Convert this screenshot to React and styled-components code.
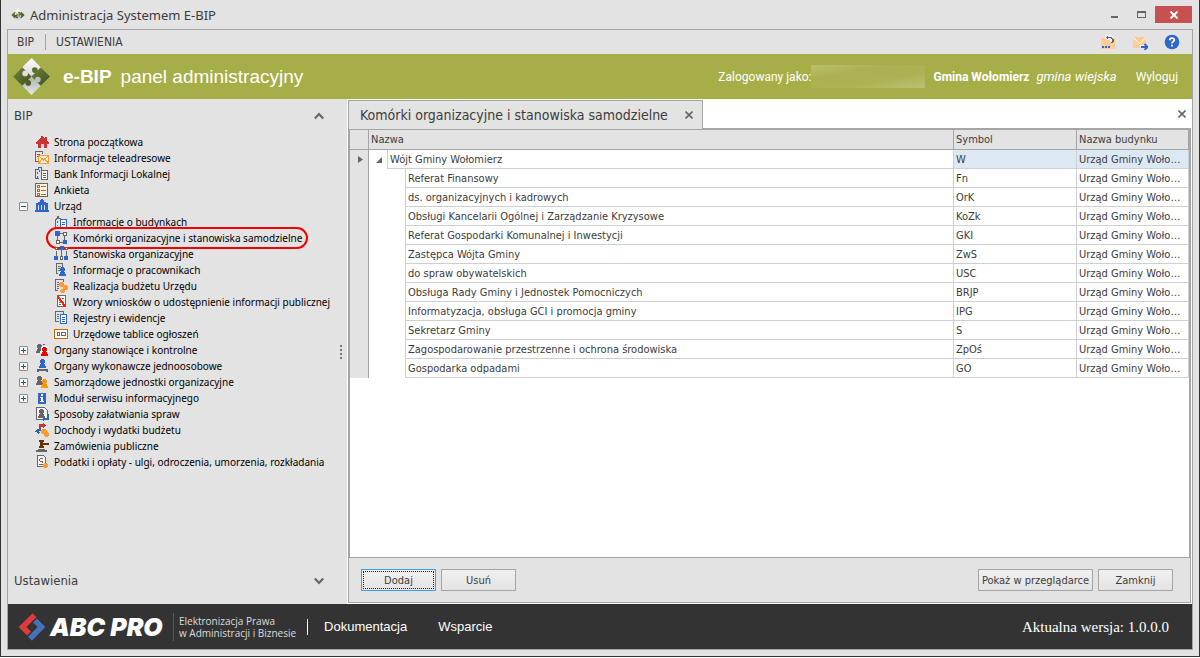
import React, { useState } from 'react';
import styled, { createGlobalStyle, css } from 'styled-components';

const c = {
  panel: '#e3e3e3',
  line: '#a5a5a5',
  rowLine: '#d0d0d0',
  text: '#3c3c3c',
  green: '#a6ae48',
  dark: '#333333',
  blue: '#2f66cc',
  grey: '#666666',
  orange: '#ff9a33',
  red: '#cc3333',
};

const Global = createGlobalStyle`
  * { box-sizing: border-box; }
  body {
    margin: 0;
    background: #ffffff;
    color: ${c.text};
    font-family: Tahoma, 'DejaVu Sans Condensed', 'Liberation Sans', sans-serif;
    font-size: 11px;
    line-height: 16px;
  }
  button, input { font: inherit; color: inherit; }
  a { color: inherit; text-decoration: none; }
  ul { list-style: none; margin: 0; padding: 0; }
`;

/* ---------- window ---------- */

const Page = styled.div`
  display: flex;
  flex-direction: column;
  min-height: 100vh;
  padding-bottom: 1px;
`;

const Window = styled.div`
  flex: 1;
  display: flex;
  flex-direction: column;
  background: ${c.panel};
  border: 1px solid ${c.dark};
  border-top: 0;
  padding: 0 6px 6px;
`;

const TitleBar = styled.header`
  display: flex;
  align-items: center;
  height: 29px;
  padding: 0 1px 0 4px;
  gap: 5px;
`;

const WindowTitle = styled.h1`
  flex: 1;
  margin: 0;
  font-family: Tahoma, 'Noto Sans', sans-serif;
  font-size: 13px;
  line-height: 20px;
  font-weight: 400;
`;

const WindowButtons = styled.div`
  display: flex;
  align-items: center;
`;

const WindowButton = styled.button`
  display: grid;
  place-items: center;
  width: ${(p) => (p.$close ? 37 : 27)}px;
  height: 17px;
  padding: 0;
  border: 0;
  background: ${(p) => (p.$close ? '#c75050' : 'transparent')};
`;

const Frame = styled.div`
  flex: 1;
  display: flex;
  flex-direction: column;
  border: 1px solid ${c.line};
`;

const MenuBar = styled.nav`
  display: flex;
  align-items: center;
  height: 24px;
  padding: 0 12px 0 9px;
`;

const MenuLink = styled.a`
  font-size: 12px;
  line-height: 16px;
  & + & {
    margin-left: 11px;
    padding-left: 10px;
    border-left: 1px solid ${c.line};
  }
`;

const Tools = styled.div`
  display: flex;
  gap: 16px;
  margin-left: auto;
`;

const IconButton = styled.button`
  display: grid;
  place-items: center;
  padding: 0;
  border: 0;
  background: transparent;
  color: ${c.grey};
`;

/* ---------- banner ---------- */

const Banner = styled.div`
  display: flex;
  align-items: center;
  height: 45px;
  padding: 0 14px 0 4px;
  background: ${c.green};
  color: #ffffff;
  font-family: 'Liberation Sans', Arial, sans-serif;
`;

const Brand = styled.div`
  flex: 1;
  display: flex;
  align-items: center;
  gap: 12px;
  font-size: 19px;
  line-height: 24px;
`;

const BrandText = styled.span`
  display: flex;
  gap: 9px;
`;

const Session = styled.div`
  display: flex;
  align-items: center;
  font-family: Roboto, sans-serif;
  font-size: 12px;
`;

const Redacted = styled.span`
  width: 114px;
  height: 23px;
  margin-right: 8px;
  background: linear-gradient(170deg, #b9bf70, #aab150 35%, #acb355 65%, #bbc175);
`;

const Account = styled.span`
  display: flex;
  gap: 7px;
`;

const Kind = styled.i`
  font-size: 13px;
`;

const Logout = styled.a`
  margin-left: 19px;
`;

/* ---------- body ---------- */

const Body = styled.div`
  flex: 1;
  display: flex;
`;

const Sidebar = styled.aside`
  flex: none;
  display: grid;
  grid-template-columns: 1fr 12px;
  width: 340px;
  border-right: 1px solid #ffffff;
`;

const Sections = styled.div`
  display: flex;
  flex-direction: column;
`;

const SectionBody = styled.ul`
  flex: 1;
`;

const Section = styled.button`
  display: flex;
  align-items: center;
  justify-content: space-between;
  width: 100%;
  height: ${(p) => (p.$last ? 46 : 35)}px;
  padding: 0 11px ${(p) => (p.$last ? 0 : 2)}px 6px;
  border: 0;
  background: transparent;
  font-size: 13px;
  line-height: 18px;
`;

const Splitter = styled.div`
  display: grid;
  align-content: center;
  justify-items: center;
  gap: 2px;
`;

const SplitterDot = styled.i`
  width: 2px;
  height: 2px;
  background: #777777;
`;

const TreeRow = styled.div`
  display: flex;
  align-items: center;
  height: 16px;
  padding-left: ${(p) => (p.$deep ? 45 : 11)}px;
  color: #000000;
  font-family: Tahoma, 'Noto Sans', sans-serif;
  font-size: 10px;
`;

const TreeSlot = styled.span`
  display: grid;
  width: 15px;
`;

const TreeToggle = styled.button`
  display: grid;
  place-items: center;
  width: 9px;
  height: 9px;
  padding: 0;
  border: 1px solid #8c8c8c;
  border-radius: 1px;
  background: #f8f8f8;
`;

const TreeLink = styled.a`
  position: relative;
  display: flex;
  align-items: center;
  gap: 4px;
  white-space: nowrap;
  ${(p) =>
    p.$marked &&
    css`
      &::after {
        content: '';
        position: absolute;
        inset: -3px -6px -3px -7px;
        border: 2px solid #f40000;
        border-radius: 11px;
      }
    `}
`;

/* ---------- document area ---------- */

const Workspace = styled.main`
  flex: 1;
  min-width: 0;
  display: flex;
  flex-direction: column;
  padding: 1px 1px 1px 0;
  background: #ffffff;
`;

const TabStrip = styled.div`
  display: flex;
  align-items: center;
  justify-content: space-between;
  height: 28px;
  padding-right: 5px;
`;

const Tab = styled.div`
  position: relative;
  display: flex;
  align-items: center;
  align-self: flex-start;
  gap: 17px;
  height: 29px;
  padding: 0 9px 0 11px;
  border: 1px solid ${c.line};
  border-bottom: 0;
  background: ${c.panel};
  font-size: 14px;
  line-height: 18px;
`;

const Panel = styled.section`
  flex: 1;
  display: flex;
  flex-direction: column;
  border: 1px solid ${c.line};
  background: ${c.panel};
`;

const Grid = styled.div`
  flex: 1;
  border: 1px solid ${c.line};
  background: #ffffff;
`;

const Table = styled.table`
  width: 100%;
  table-layout: fixed;
  border-collapse: separate;
  border-spacing: 0;
`;

const Col = styled.col`
  width: ${(p) => (p.$w ? `${p.$w}px` : 'auto')};
`;

const Th = styled.th`
  height: 20px;
  padding: 0 2px;
  border: solid ${c.line};
  border-width: 0 1px 1px 0;
  background: ${c.panel};
  font-weight: 400;
  text-align: left;
`;

const Td = styled.td`
  height: 19px;
  padding: 2px 2px 0;
  border: solid ${c.rowLine};
  border-width: 0 1px 1px 0;
  background: ${(p) => (p.$active ? '#dce9f4' : '#ffffff')};
  overflow: hidden;
  text-overflow: ellipsis;
  white-space: nowrap;
`;

const Indicator = styled.td`
  padding: 0 0 0 8px;
  border-right: 1px solid ${c.line};
  background: ${c.panel};
  line-height: 0;
`;

const NameTd = styled.td`
  padding: 0;
  border-right: 1px solid ${c.rowLine};
`;

const NameCell = styled.div`
  display: flex;
  align-items: center;
  padding-left: ${(p) => (p.$child ? 36 : 0)}px;
`;

const Expander = styled.button`
  display: grid;
  place-items: center;
  width: 18px;
  height: 18px;
  padding: 0 0 0 2px;
  border: 0;
  background: transparent;
`;

const NameText = styled.span`
  flex: 1;
  height: 19px;
  padding: 2px 0 0 2px;
  border: solid ${c.rowLine};
  border-width: 0 0 1px 1px;
`;

const Actions = styled.div`
  display: flex;
  gap: 5px;
  height: 44px;
  padding: 11px 17px 0 12px;
`;

const Button = styled.button`
  width: ${(p) => (p.$wide ? 115 : 75)}px;
  height: 22px;
  padding: 1px 0 0;
  border: 1px solid ${(p) => (p.$focused ? '#3c9df5' : c.line)};
  background: linear-gradient(#f0f0f0, #e4e4e4);
  white-space: nowrap;
  line-height: 16px;
  ${(p) =>
    p.$focused &&
    css`
      outline: 1px dotted #222222;
      outline-offset: -3px;
    `}
  ${(p) =>
    p.$push &&
    css`
      margin-left: auto;
    `}
`;

/* ---------- footer ---------- */

const Footer = styled.footer`
  display: flex;
  align-items: center;
  height: 45px;
  padding: 0 23px 0 10px;
  background: ${c.dark};
  color: #ffffff;
`;

const Company = styled.strong`
  width: 123px;
  margin-left: 4px;
  font-family: Inter, sans-serif;
  font-size: 25px;
  line-height: 28px;
  font-weight: 900;
  font-style: italic;
  white-space: nowrap;
`;

const Tagline = styled.p`
  margin: 0;
  padding: 2px 0 2px 5px;
  border-left: 1px solid #a03a3a;
  color: #dddddd;
  font-family: 'Open Sans', 'Noto Sans', sans-serif;
  font-size: 10px;
  line-height: 12px;
  white-space: nowrap;
`;

const FooterNav = styled.nav`
  display: flex;
  gap: 31px;
  margin-left: 11px;
  padding-left: 16px;
  border-left: 1px solid #ffffff;
  font-family: 'Liberation Sans', Arial, sans-serif;
  font-size: 13px;
`;

const Version = styled.span`
  margin-left: auto;
  font-family: 'Liberation Serif', 'Times New Roman', serif;
  font-size: 15px;
`;

/* ---------- drawings ---------- */

const Svg = ({ w = 16, h = 16, soft, children }) => (
  <svg
    width={w}
    height={h}
    viewBox={`0 0 ${w} ${h}`}
    shapeRendering={soft ? 'auto' : 'crispEdges'}
    fill="none"
    aria-hidden="true"
  >
    {children}
  </svg>
);

const Person = ({ x, y, fill }) => (
  <path
    transform={`translate(${x} ${y})`}
    fill={fill}
    d="M2 0h3v1h1v3h-1v1h1v2h1v2H0V7h1V5h1V4H1V1h1z"
  />
);

const art = {
  home: <path fill={c.red} d="M7 2h2v1h1v1h1V3h2v4h1v1h1v2h-2v4h-3v-4H7v4H4v-4H2V8h1V7h1V6h1V5h1V4h1z" />,
  mail: (
    <>
      <path stroke={c.grey} d="M5 11.500H1.500V1.500H8.500V4M3 4.500h3M3 6.500h1" />
      <rect x="4.500" y="5.500" width="10" height="8" fill="#fff3e4" stroke={c.orange} />
      <path stroke={c.orange} d="M5 6l4.500 4L14 6M5 13l3-4M14 13l-3-4" />
    </>
  ),
  bank: (
    <>
      <path stroke="#336699" d="M1.500 12V3.500h3V1.500h3v4M3.500 6v2M3.500 10v2M1 12.500h4M5.500 4v2" />
      <rect x="7.500" y="4.500" width="6" height="9" fill="#fff" stroke={c.grey} />
      <path stroke={c.grey} d="M9 7.500h3M9 9.500h3M9 11.500h3" />
    </>
  ),
  survey: (
    <>
      <rect x="1.500" y="1.500" width="12" height="13" stroke={c.grey} fill="#f4f1ee" />
      <path fill="#cc6600" fillRule="evenodd" d="M3 3h3v3H3zM4 4v1h1V4zM3 7h3v3H3zM4 8v1h1V8zM3 11h3v3H3zM4 12v1h1v-1zM7 4h5v1H7zM7 8h5v1H7zM7 12h5v1H7z" />
    </>
  ),
  office: (
    <path
      fill={c.blue}
      fillRule="evenodd"
      d="M7 1h2v1h1v2h2v1h2v2H2V5h2V4h2V2h1zM2 7h12v5h1v2H1v-2h1zM4 7v5h1V7zM7 7v5h1V7zM10 7v5h1V7z"
    />
  ),
  building: (
    <>
      <path stroke={c.grey} d="M2.500 13V5.500h1V4.500h1V2.500h1v2h2v2M4.500 7v2M4.500 11v1M2 13.500h5" />
      <rect x="7.500" y="5.500" width="6" height="8" fill="#fff" stroke={c.blue} />
      <path stroke={c.blue} d="M9 8.500h3M9 10.500h3" />
    </>
  ),
  units: (
    <>
      <path stroke={c.grey} d="M4.500 5v6M11.500 6v4M7 3.500h3M7 12.500h3" />
      <path fill={c.blue} d="M2 1h5v5H2zM10 10h4v4h-4z" />
      <path fill="#fff" stroke={c.grey} d="M10.500 2.500h3v3h-3zM3.500 10.500h3v3h-3z" />
    </>
  ),
  positions: (
    <>
      <path stroke={c.grey} d="M3.500 5v6M8.500 4v6M13.500 5v6M4 3.500h9" />
      <path fill={c.blue} d="M7 0h4v4H7zM1 10h4v4H1zM11 10h4v4h-4z" />
      <path fill="#fff" stroke={c.grey} d="M2.500 1.500h2v2h-2zM12.500 1.500h2v2h-2zM7.500 10.500h2v3h-2z" />
    </>
  ),
  staff: (
    <>
      <path stroke={c.grey} d="M5 11.500H3.500V1.500H9.500V5M5 4.500h3M5 6.500h2M5 8.500h2" />
      <Person x={6} y={5} fill={c.blue} />
    </>
  ),
  budget: (
    <>
      <path stroke={c.grey} d="M5 12.500H2.500V1.500H10.500V4M4 4.500h2M4 6.500h2M4 8.500h2M4 10.500h2" />
      <path fill={c.orange} d="M7 4h3v1h1v3h-1v1H7V8H6V5h1zM11 7h3v1h1v3h-1v1h-3v-1h-1V8h1zM8 11h3v1h1v2h-1v1H8v-1H7v-2h1z" />
    </>
  ),
  forms: (
    <>
      <rect x="4.500" y="1.500" width="8" height="11" fill="#fff" stroke={c.grey} />
      <path stroke={c.grey} d="M6 4.500h2M9 4.500h2M6 6.500h2M6 8.500h2M9 8.500h2M6 10.500h2" />
      <path stroke="#ff2200" strokeWidth="2" d="M5 2l7 11" />
    </>
  ),
  registry: (
    <>
      <path stroke={c.grey} d="M6 11.500H2.500V1.500H10.500V4M4 4.500h2M7 4.500h2M4 6.500h2M4 8.500h2" />
      <rect x="7.500" y="4.500" width="6" height="9" fill="#fff" stroke={c.blue} />
      <path stroke={c.blue} d="M9 7.500h3M9 9.500h3M9 11.500h3" />
    </>
  ),
  board: (
    <>
      <rect x="1.500" y="3.500" width="13" height="9" fill="#fff" stroke="#cc6600" />
      <path stroke={c.grey} d="M4.500 6.500h2v3h-2zM8.500 6.500h4v3h-4z" />
    </>
  ),
  council: (
    <>
      <Person x={2} y={2} fill={c.grey} />
      <path stroke={c.blue} d="M9 2.500h2" />
      <path fill="#ffffff" d="M8 4h5v1h1v4h1v2H6V9h1V5h1z" />
      <Person x={7} y={5} fill="#f00000" />
    </>
  ),
  executive: (
    <>
      <Person x={5} y={1} fill={c.blue} />
      <path fill={c.grey} d="M3 11h11v3h-2v-1H5v1H3z" />
    </>
  ),
  agencies: (
    <>
      <Person x={2} y={2} fill={c.grey} />
      <Person x={7} y={5} fill="#ff9900" />
    </>
  ),
  info: (
    <>
      <path fill={c.blue} d="M4 3h8v11H4z" />
      <path fill="#fff" d="M7 4h2v2H7zM6 7h3v4h1v1H6v-1h1V8H6z" />
    </>
  ),
  matters: (
    <>
      <path fill="#f2f2f2" stroke={c.grey} d="M2.500 1.500h8l3 3v9h-11z" />
      <Person x={4} y={3} fill={c.grey} />
      <path fill="#336699" d="M13 8h2v6H10v1H9v-1H8v-1h1v-1h1v-1h1v1h2z" />
    </>
  ),
  income: (
    <>
      <path fill={c.red} d="M5 2h4V1h1v1h1v1h1v1h-1v1h-1v1H9V5H7v2H5z" />
      <path fill="#336699" d="M5 6h2v3H5v1h1v1H5v1H4v-1H3v-1H1V9h1V8h1V7h2z" />
      <path fill={c.orange} d="M8 7h4v1h1v2h1v1h1v3h-1v1h-3v-1h-1v-2H8v-1H7V8h1z" />
    </>
  ),
  tenders: (
    <>
      <path fill="#663300" d="M5 2h5v2H9v1h6v2H9v1h1v2H5V8h1V4H5z" />
      <path fill={c.grey} d="M4 11h7v1h2v2H2v-2h2z" />
    </>
  ),
  taxes: (
    <>
      <path fill="#f6f6f6" stroke={c.grey} d="M3.500 1.500h6l2 2v9h-8z" />
      <path stroke={c.grey} d="M6 4.500h3M5.500 5v2M6 7.500h3M8.500 8v1M5 10.500h4" />
      <path fill={c.orange} d="M10 9h3v1h1v3h-1v1h-3v-1H9v-3h1z" />
    </>
  ),
};

const Icon = ({ name }) => <Svg>{art[name]}</Svg>;

const PuzzleLogo = ({ size }) => (
  <svg width={size} height={size} viewBox="0 0 40 40" aria-hidden="true">
    <defs>
      <linearGradient id="pw" x1="0" y1="0" x2="0" y2="1">
        <stop offset="0" stopColor="#ffffff" />
        <stop offset="0.450" stopColor="#dcdcdc" />
        <stop offset="0.550" stopColor="#b4b4b4" />
        <stop offset="1" stopColor="#e8e8e8" />
      </linearGradient>
      <linearGradient id="pg" x1="0" y1="0" x2="1" y2="1">
        <stop offset="0" stopColor="#74853a" />
        <stop offset="1" stopColor="#3c4f1c" />
      </linearGradient>
    </defs>
    <path d="M20 1l19 19-19 19L1 20z" fill="url(#pw)" />
    <path d="M10.500 10.500L1 20l9.500 9.500L20 20z" fill="url(#pg)" />
    <path d="M29.500 10.500L39 20l-9.500 9.500L20 20z" fill="url(#pg)" />
    <circle cx="13.500" cy="16.800" r="2.900" fill="#e0e0e0" />
    <circle cx="26.500" cy="23.200" r="2.900" fill="#bebebe" />
    <circle cx="23.400" cy="13.400" r="2.900" fill="#5b6e2c" />
    <circle cx="16.600" cy="26.600" r="2.900" fill="#4a5d24" />
  </svg>
);

const AbcMark = () => (
  <svg width="28" height="28" viewBox="0 0 28 28" fill="none" strokeWidth="5.500" aria-hidden="true">
    <path d="M16.500 2.300L4.500 14l6.500 6.500" stroke="#e03a3c" />
    <path d="M17 7.500l6.500 6.500L12 25.700" stroke="#4471b8" />
  </svg>
);

const Cross = ({ size = 8, color = c.grey, thick = '1.600' }) => (
  <svg width={size} height={size} viewBox="0 0 8 8" aria-hidden="true">
    <path d="M0.500 0.500l7 7M7.500 0.500l-7 7" stroke={color} strokeWidth={thick} />
  </svg>
);

const Chevron = ({ up }) => (
  <svg width="10" height="8" viewBox="0 0 10 8" fill="none" aria-hidden="true">
    <path d={up ? 'M0.800 6.500L5 2l4.200 4.500' : 'M0.800 1.500L5 6l4.200-4.500'} stroke={c.grey} strokeWidth="2.200" />
  </svg>
);

/* ---------- data ---------- */

const tree = [
  { label: 'Strona początkowa', icon: 'home' },
  { label: 'Informacje teleadresowe', icon: 'mail' },
  { label: 'Bank Informacji Lokalnej', icon: 'bank' },
  { label: 'Ankieta', icon: 'survey' },
  {
    label: 'Urząd',
    icon: 'office',
    children: [
      { label: 'Informacje o budynkach', icon: 'building' },
      { label: 'Komórki organizacyjne i stanowiska samodzielne', icon: 'units', marked: true },
      { label: 'Stanowiska organizacyjne', icon: 'positions' },
      { label: 'Informacje o pracownikach', icon: 'staff' },
      { label: 'Realizacja budżetu Urzędu', icon: 'budget' },
      { label: 'Wzory wniosków o udostępnienie informacji publicznej', icon: 'forms' },
      { label: 'Rejestry i ewidencje', icon: 'registry' },
      { label: 'Urzędowe tablice ogłoszeń', icon: 'board' },
    ],
  },
  { label: 'Organy stanowiące i kontrolne', icon: 'council', children: [] },
  { label: 'Organy wykonawcze jednoosobowe', icon: 'executive', children: [] },
  { label: 'Samorządowe jednostki organizacyjne', icon: 'agencies', children: [] },
  { label: 'Moduł serwisu informacyjnego', icon: 'info', children: [] },
  { label: 'Sposoby załatwiania spraw', icon: 'matters' },
  { label: 'Dochody i wydatki budżetu', icon: 'income' },
  { label: 'Zamówienia publiczne', icon: 'tenders' },
  { label: 'Podatki i opłaty - ulgi, odroczenia, umorzenia, rozkładania', icon: 'taxes' },
];

const units = [
  ['Referat Finansowy', 'Fn'],
  ['ds. organizacyjnych i kadrowych', 'OrK'],
  ['Obsługi Kancelarii Ogólnej i Zarządzanie Kryzysowe', 'KoZk'],
  ['Referat Gospodarki Komunalnej i Inwestycji', 'GKI'],
  ['Zastępca Wójta Gminy', 'ZwS'],
  ['do spraw obywatelskich', 'USC'],
  ['Obsługa Rady Gminy i Jednostek Pomocniczych', 'BRJP'],
  ['Informatyzacja, obsługa GCI i promocja gminy', 'IPG'],
  ['Sekretarz Gminy', 'S'],
  ['Zagospodarowanie przestrzenne i ochrona środowiska', 'ZpOś'],
  ['Gospodarka odpadami', 'GO'],
];

const building = 'Urząd Gminy Wołomierz';

function TreeItem({ item, deep }) {
  const [open, setOpen] = useState(Boolean(item.children && item.children.length));
  return (
    <li>
      <TreeRow $deep={deep}>
        {!deep && (
          <TreeSlot>
            {item.children && (
              <TreeToggle type="button" aria-label={item.label} aria-expanded={open} onClick={() => setOpen(!open)}>
                <Svg w={7} h={7}>
                  <path stroke="#2b5797" d={open ? 'M1 3.500h5' : 'M1 3.500h5M3.500 1v5'} />
                </Svg>
              </TreeToggle>
            )}
          </TreeSlot>
        )}
        <TreeLink href="#" $marked={item.marked}>
          <Icon name={item.icon} />
          {item.label}
        </TreeLink>
      </TreeRow>
      {open && (
        <ul>
          {item.children.map((child) => (
            <TreeItem key={child.label} item={child} deep />
          ))}
        </ul>
      )}
    </li>
  );
}

export default function App() {
  const [expanded, setExpanded] = useState(true);
  return (
    <Page>
      <Global />
      <Window>
        <TitleBar>
          <PuzzleLogo size={14} />
          <WindowTitle>Administracja Systemem E-BIP</WindowTitle>
          <WindowButtons>
            <WindowButton type="button" aria-label="Minimalizuj">
              <Svg w={8} h={8}><path fill={c.grey} d="M0 5h7v2H0z" /></Svg>
            </WindowButton>
            <WindowButton type="button" aria-label="Maksymalizuj">
              <Svg w={9} h={8}><path fill={c.grey} fillRule="evenodd" d="M0 0h9v7H0zM1 2h7v4H1z" /></Svg>
            </WindowButton>
            <WindowButton type="button" aria-label="Zamknij okno" $close>
              <Cross color="#ffffff" thick="2" />
            </WindowButton>
          </WindowButtons>
        </TitleBar>

        <Frame>
          <MenuBar>
            <MenuLink href="#">BIP</MenuLink>
            <MenuLink href="#">USTAWIENIA</MenuLink>
            <Tools>
              <IconButton type="button" aria-label="Cofnij">
                <Svg>
                  <path fill="#ffcc99" d="M1 4h14v11H1z" />
                  <path fill={c.blue} d="M2 12h2v2H2zM5 12h2v2H5zM8 12h2v2H8z" />
                  <path fill="#eeeeee" d="M5 1h7v1h2v6h-4V6H7V5H5z" />
                  <path fill={c.grey} d="M7 2h1v1h4v1h1v1h1v3h-1v1h-2V8h1V5h-1V4H8v1H7V4H6V3h1z" />
                </Svg>
              </IconButton>
              <IconButton type="button" aria-label="Poczta">
                <Svg soft>
                  <path fill="#ffcc99" d="M1 3h13v11H1z" />
                  <path stroke="#ffffff" d="M1 3.500l6.500 6L14 3.500" />
                  <path stroke="#eeeeee" strokeWidth="3" d="M8 12.500h7" />
                  <path stroke={c.blue} strokeWidth="2" d="M9 13h6M12.500 10l3 3-3 3" />
                </Svg>
              </IconButton>
              <IconButton type="button" aria-label="Pomoc">
                <Svg soft>
                  <circle cx="8" cy="8" r="7.300" fill={c.blue} />
                  <path stroke="#ffffff" strokeWidth="1.800" d="M5.700 6.300c0-3 4.800-2.800 4.600-.2C10.200 7.600 8 7.600 8 9.600M8 10.800v1.700" />
                </Svg>
              </IconButton>
            </Tools>
          </MenuBar>

          <Banner>
            <Brand>
              <PuzzleLogo size={39} />
              <BrandText><b>e-BIP</b><span>panel administracyjny</span></BrandText>
            </Brand>
            <Session>
              <span>Zalogowany jako:</span>
              <Redacted />
              <Account><b>Gmina Wołomierz</b><Kind>gmina wiejska</Kind></Account>
              <Logout href="#">Wyloguj</Logout>
            </Session>
          </Banner>

          <Body>
            <Sidebar>
              <Sections>
                <Section as="div">
                  <span>BIP</span>
                  <IconButton type="button" aria-label="Zwiń BIP"><Chevron up /></IconButton>
                </Section>
                <SectionBody>
                  {tree.map((item) => (
                    <TreeItem key={item.label} item={item} />
                  ))}
                </SectionBody>
                <Section type="button" $last>
                  <span>Ustawienia</span>
                  <Chevron />
                </Section>
              </Sections>
              <Splitter>
                {[0, 1, 2, 3].map((n) => <SplitterDot key={n} />)}
              </Splitter>
            </Sidebar>

            <Workspace>
              <TabStrip>
                <Tab>
                  <span>Komórki organizacyjne i stanowiska samodzielne</span>
                  <IconButton type="button" aria-label="Zamknij kartę"><Cross /></IconButton>
                </Tab>
                <IconButton type="button" aria-label="Zamknij widok"><Cross /></IconButton>
              </TabStrip>
              <Panel>
                <Grid>
                  <Table>
                    <colgroup>
                      <Col $w={19} />
                      <Col />
                      <Col $w={123} />
                      <Col $w={112} />
                    </colgroup>
                    <thead>
                      <tr>
                        <Th aria-label="Wskaźnik" />
                        <Th>Nazwa</Th>
                        <Th>Symbol</Th>
                        <Th>Nazwa budynku</Th>
                      </tr>
                    </thead>
                    <tbody>
                      <tr>
                        <Indicator>
                          <Svg w={5} h={7} soft><path fill={c.grey} d="M0 0l5 3.500L0 7z" /></Svg>
                        </Indicator>
                        <NameTd>
                          <NameCell>
                            <Expander
                              type="button"
                              aria-label="Wójt Gminy Wołomierz"
                              aria-expanded={expanded}
                              onClick={() => setExpanded(!expanded)}
                            >
                              <Svg w={6} h={6} soft><path fill={c.grey} d="M6 0v6H0z" /></Svg>
                            </Expander>
                            <NameText>Wójt Gminy Wołomierz</NameText>
                          </NameCell>
                        </NameTd>
                        <Td $active>W</Td>
                        <Td $active>{building}</Td>
                      </tr>
                      {expanded &&
                        units.map(([name, symbol]) => (
                          <tr key={name}>
                            <Indicator />
                            <NameTd>
                              <NameCell $child>
                                <NameText>{name}</NameText>
                              </NameCell>
                            </NameTd>
                            <Td>{symbol}</Td>
                            <Td>{building}</Td>
                          </tr>
                        ))}
                    </tbody>
                  </Table>
                </Grid>
                <Actions>
                  <Button type="button" $focused>Dodaj</Button>
                  <Button type="button">Usuń</Button>
                  <Button type="button" $wide $push>Pokaż w przeglądarce</Button>
                  <Button type="button">Zamknij</Button>
                </Actions>
              </Panel>
            </Workspace>
          </Body>

          <Footer>
            <AbcMark />
            <Company>ABC PRO</Company>
            <Tagline>
              Elektronizacja Prawa
              <br />w Administracji i Biznesie
            </Tagline>
            <FooterNav>
              <a href="#">Dokumentacja</a>
              <a href="#">Wsparcie</a>
            </FooterNav>
            <Version>Aktualna wersja: 1.0.0.0</Version>
          </Footer>
        </Frame>
      </Window>
    </Page>
  );
}
